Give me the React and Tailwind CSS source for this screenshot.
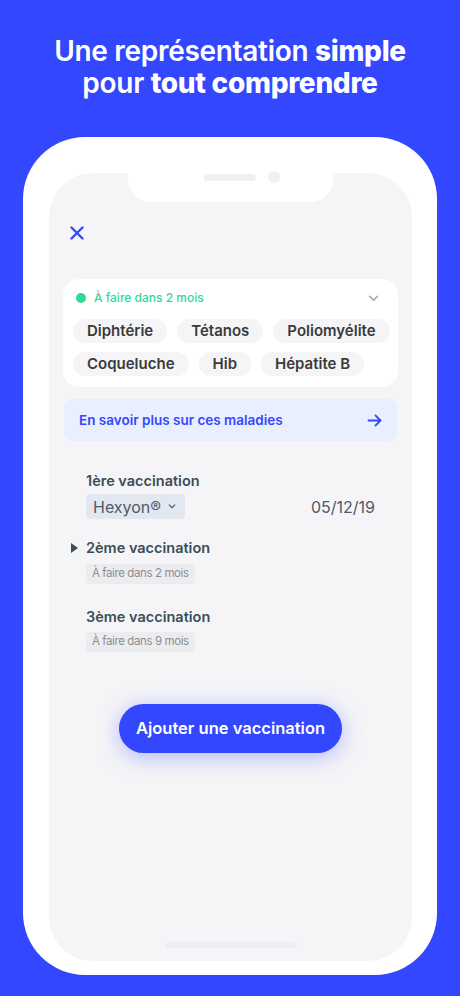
import React from 'react';

const tags = [
  ['Diphtérie', 'Tétanos', 'Poliomyélite'],
  ['Coqueluche', 'Hib', 'Hépatite B'],
];

const Chevron = ({ className }) => (
  <svg viewBox="0 0 12 8" className={className} fill="none" stroke="currentColor" strokeWidth="1.8" strokeLinecap="round" strokeLinejoin="round">
    <path d="M1.5 1.5 6 6l4.5-4.5" />
  </svg>
);

const Badge = ({ children }) => (
  <div className="flex">
    <span className="flex h-[20px] items-center rounded-[4px] bg-[#ececef] px-[6px] text-[11.5px] tracking-[-0.4px] text-[#8a8f96]">
      {children}
    </span>
  </div>
);

const App = () => {
  return (
    <div className="min-h-screen w-[460px] h-[996px] overflow-hidden bg-[#3347ff] font-['Inter','Noto_Sans',sans-serif]">
      <h1 className="pt-[35px] text-center text-[28px] leading-[32px] font-semibold text-white tracking-[-0.3px]">
        Une représentation <span className="font-extrabold">simple</span>
        <br />
        pour <span className="font-extrabold">tout comprendre</span>
      </h1>

      {/* phone frame */}
      <div className="ml-[23px] mt-[38px] w-[414px] rounded-[62px] bg-white pl-[26px] pr-[25px] pt-[36px] pb-[14px]">
        <div className="relative flex h-[788px] flex-col rounded-[44px] bg-[#f5f5f7]">
          {/* notch */}
          <div className="absolute left-[79px] top-0 h-[29px] w-[205px] rounded-b-[22px] bg-white">
            <div className="absolute left-[76px] top-[1px] h-[7px] w-[52px] rounded-full bg-[#eef0f3]" />
            <div className="absolute left-[140px] top-[-2px] h-[12px] w-[12px] rounded-full bg-[#eef0f3]" />
          </div>

          <div className="mt-[53px] pl-[21px]">
            <svg viewBox="0 0 14 14" className="h-[14px] w-[14px] text-[#3347ff]" fill="none" stroke="currentColor" strokeWidth="2.4" strokeLinecap="round">
              <path d="M1.5 1.5l11 11M12.5 1.5l-11 11" />
            </svg>
          </div>

          <div className="mx-[14px] mt-[39px] rounded-[16px] bg-white px-[10px] pt-[9px] pb-[11px]">
            <div className="flex h-[20px] items-center justify-between">
              <div className="flex items-center gap-[8px] pl-[3px]">
                <span className="h-[10px] w-[10px] rounded-full bg-[#2fd996]" />
                <span className="text-[12px] font-medium text-[#2fd996]">À faire dans 2 mois</span>
              </div>
              <Chevron className="mr-[9px] h-[7px] w-[11px] text-[#a0a4ab]" />
            </div>
            <div className="mt-[11px] flex flex-col gap-[9px]">
              {tags.map((row, i) => (
                <div key={i} className="flex gap-[10px]">
                  {row.map((t) => (
                    <span key={t} className="flex h-[24px] items-center rounded-full bg-[#f5f5f7] px-[14px] text-[15px] font-semibold text-[#3a3a3c]">
                      {t}
                    </span>
                  ))}
                </div>
              ))}
            </div>
          </div>

          <div className="mx-[15px] mt-[12px] flex h-[42px] items-center justify-between rounded-[8px] bg-[#eaefff] px-[15px]">
            <span className="text-[13.5px] font-semibold text-[#3347ff]">En savoir plus sur ces maladies</span>
            <svg viewBox="0 0 16 14" className="h-[13px] w-[15px] text-[#3347ff]" fill="none" stroke="currentColor" strokeWidth="2" strokeLinecap="round" strokeLinejoin="round">
              <path d="M1.5 7h13M9 1.5 14.5 7 9 12.5" />
            </svg>
          </div>

          <div className="px-[37px]">
            <div className="mt-[30px] h-[20px] text-[14.5px] font-semibold leading-[20px] text-[#3b4d59]">1ère vaccination</div>
            <div className="mt-[3px] flex items-center justify-between">
              <div className="flex h-[25px] items-center gap-[7px] rounded-[4px] bg-[#e3e7ef] pl-[7px] pr-[9px] text-[16px] text-[#4b5b6b]">
                Hexyon®
                <Chevron className="h-[5px] w-[8px] text-[#4b5b6b]" />
              </div>
              <span className="text-[16px] text-[#4b5b6b]">05/12/19</span>
            </div>

            <div className="relative mt-[19px] h-[20px] text-[14.5px] font-semibold leading-[20px] text-[#3b4d59]">
              <svg viewBox="0 0 7 10" className="absolute left-[-15px] top-[5px] h-[10px] w-[7px] text-[#3b4d59]" fill="currentColor">
                <path d="M0 0l7 5-7 5z" />
              </svg>
              2ème vaccination
            </div>
            <div className="mt-[6px]"><Badge>À faire dans 2 mois</Badge></div>

            <div className="mt-[23px] h-[20px] text-[14.5px] font-semibold leading-[20px] text-[#3b4d59]">3ème vaccination</div>
            <div className="mt-[5px]"><Badge>À faire dans 9 mois</Badge></div>
          </div>

          <div className="mt-[52px] flex justify-center">
            <button className="h-[49px] w-[223px] rounded-full bg-[#3347ff] text-[16.5px] font-semibold text-white shadow-[0_4px_22px_rgba(51,71,255,0.35)]">
              Ajouter une vaccination
            </button>
          </div>

          <div className="mx-auto mt-auto mb-[13px] h-[6px] w-[132px] rounded-full bg-[#eceff2]" />
        </div>
      </div>
    </div>
  );
};

export default App;
